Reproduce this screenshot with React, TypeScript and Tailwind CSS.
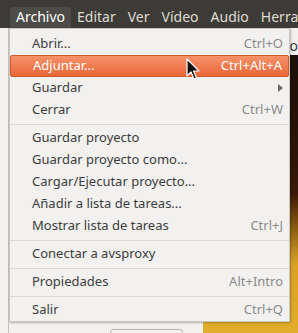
import React from "react";

type Item =
  | { kind: "item"; label: string; shortcut?: string; submenu?: boolean; active?: boolean }
  | { kind: "sep" };

const MENUS = ["Archivo", "Editar", "Ver", "Vídeo", "Audio", "Herramientas"];

const ITEMS: Item[] = [
  { kind: "item", label: "Abrir...", shortcut: "Ctrl+O" },
  { kind: "item", label: "Adjuntar...", shortcut: "Ctrl+Alt+A", active: true },
  { kind: "item", label: "Guardar", submenu: true },
  { kind: "item", label: "Cerrar", shortcut: "Ctrl+W" },
  { kind: "sep" },
  { kind: "item", label: "Guardar proyecto" },
  { kind: "item", label: "Guardar proyecto como..." },
  { kind: "item", label: "Cargar/Ejecutar proyecto..." },
  { kind: "item", label: "Añadir a lista de tareas..." },
  { kind: "item", label: "Mostrar lista de tareas", shortcut: "Ctrl+J" },
  { kind: "sep" },
  { kind: "item", label: "Conectar a avsproxy" },
  { kind: "sep" },
  { kind: "item", label: "Propiedades", shortcut: "Alt+Intro" },
  { kind: "sep" },
  { kind: "item", label: "Salir", shortcut: "Ctrl+Q" },
];

function Cursor() {
  return (
    <svg width="16" height="24" viewBox="0 0 16 24" className="absolute left-[186px] top-[58px]">
      <path
        d="M1 1 L1 18 L5 14 L8 21 L10.5 20 L7.5 13 L13 13 Z"
        fill="#111"
        stroke="#fff"
        strokeWidth="1.2"
        strokeLinejoin="round"
      />
    </svg>
  );
}

export default function App() {
  return (
    <div className="relative w-[298px] h-[333px] overflow-hidden bg-[#f2f1f0] font-['Noto_Sans',sans-serif]">
      {/* Menu bar */}
      <div className="flex h-[28px] items-end overflow-hidden bg-[#3c3b37] pl-[10px] text-[14px] text-[#dfdbd2]">
        {MENUS.map((m, i) => (
          <div
            key={m}
            className={`flex h-[21px] shrink-0 items-center px-[6px] pb-[2px] whitespace-nowrap ${
              i === 0 ? "rounded-t-[3px] bg-[#4c4b47] text-white" : ""
            }`}
          >
            {m}
          </div>
        ))}
      </div>

      {/* Window content behind the menu */}
      <div className="flex h-[305px]">
        <div className="ml-[8px] flex w-[201px] items-end border-l border-[#c3c1bd] bg-[#f2f1f0]">
          <div className="mb-[-6px] ml-[101px] h-[10px] w-[73px] rounded-[3px] border border-[#b8b6b2] bg-[#f2f1f0]" />
        </div>
        <div className="flex flex-1 flex-col">
          <div className="h-[27px] bg-[#f2f1f0] pl-[83px] pt-[7px] text-[14px] text-[#3c3c3c]">lo</div>
          <div className="flex-1 bg-[linear-gradient(180deg,#1c0f08_0%,#2a1408_35%,#3a1a06_50%,#8a5a10_62%,#d9a126_75%,#e2ad2a_100%)]" />
        </div>
      </div>

      {/* Dropdown */}
      <div className="absolute left-[9px] top-[28px] w-[281px] border border-[#c9c7c3] bg-[#f2f1f0] pt-[4px] shadow-[1px_1px_2px_rgba(0,0,0,0.25)]">
        {ITEMS.map((it, i) =>
          it.kind === "sep" ? (
            <div key={i} className="mt-[3px] mb-[2px] h-px bg-[#dad8d5]" />
          ) : (
            <div
              key={i}
              className={`flex h-[22px] items-center justify-between pl-[22px] pr-[6px] text-[13px] whitespace-nowrap ${
                it.active
                  ? "rounded-[2px] border border-[#d4592a] bg-[linear-gradient(180deg,#f6926a,#e9683a)] text-white"
                  : "text-[#3c3c3c]"
              }`}
            >
              <span>{it.label}</span>
              {it.shortcut && (
                <span className={it.active ? "text-white" : "text-[#8b8a88]"}>{it.shortcut}</span>
              )}
              {it.submenu && (
                <svg width="5" height="8" viewBox="0 0 5 8">
                  <path d="M0 0 L5 4 L0 8 Z" fill="#6a6a68" />
                </svg>
              )}
            </div>
          )
        )}
      </div>

      <Cursor />
    </div>
  );
}
